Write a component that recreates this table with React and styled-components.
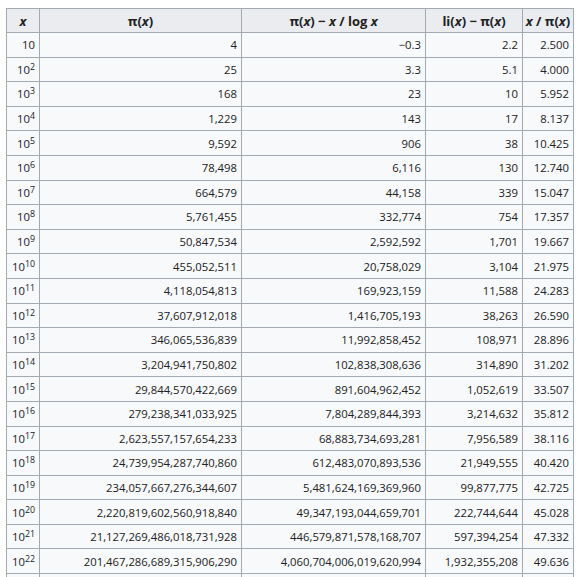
import React from 'react'
import styled, { createGlobalStyle } from 'styled-components'

const GlobalStyle = createGlobalStyle`
  html, body {
    margin: 0;
    padding: 0;
    background: #ffffff;
  }
`;

const Page = styled.div`
  padding: 8px 0 0 6px;
  font-family: 'Open Sans', 'Noto Sans', sans-serif;
  color: #202122;
`;

const Table = styled.table`
  border-collapse: collapse;
  background: #f8f9fa;
  border: 1px solid #a2a9b1;
  font-size: 11.3px;
  table-layout: fixed;
  width: 567px;
`;

const Col = styled.col`
  width: ${props => props.$w}px;
`;

const HeadRow = styled.tr`
  height: 24px;
`;

const HeadCell = styled.th`
  background: #eaecf0;
  border: 1px solid #a2a9b1;
  padding: 0 2px;
  font-size: 13px;
  font-weight: 700;
  text-align: center;
  white-space: nowrap;
  overflow: hidden;

  i {
    font-style: italic;
  }
`;

const Row = styled.tr`
  height: 24.6px;
`;

const Cell = styled.td`
  border: 1px solid #a2a9b1;
  padding: 0 4px;
  text-align: right;
  white-space: nowrap;
  overflow: hidden;
`;

const Sup = styled.sup`
  font-size: 0.78em;
  line-height: 0;
  vertical-align: 0.45em;
`;

const rows = [
  [1, '4', '\u22120.3', '2.2', '2.500'],
  [2, '25', '3.3', '5.1', '4.000'],
  [3, '168', '23', '10', '5.952'],
  [4, '1,229', '143', '17', '8.137'],
  [5, '9,592', '906', '38', '10.425'],
  [6, '78,498', '6,116', '130', '12.740'],
  [7, '664,579', '44,158', '339', '15.047'],
  [8, '5,761,455', '332,774', '754', '17.357'],
  [9, '50,847,534', '2,592,592', '1,701', '19.667'],
  [10, '455,052,511', '20,758,029', '3,104', '21.975'],
  [11, '4,118,054,813', '169,923,159', '11,588', '24.283'],
  [12, '37,607,912,018', '1,416,705,193', '38,263', '26.590'],
  [13, '346,065,536,839', '11,992,858,452', '108,971', '28.896'],
  [14, '3,204,941,750,802', '102,838,308,636', '314,890', '31.202'],
  [15, '29,844,570,422,669', '891,604,962,452', '1,052,619', '33.507'],
  [16, '279,238,341,033,925', '7,804,289,844,393', '3,214,632', '35.812'],
  [17, '2,623,557,157,654,233', '68,883,734,693,281', '7,956,589', '38.116'],
  [18, '24,739,954,287,740,860', '612,483,070,893,536', '21,949,555', '40.420'],
  [19, '234,057,667,276,344,607', '5,481,624,169,369,960', '99,877,775', '42.725'],
  [20, '2,220,819,602,560,918,840', '49,347,193,044,659,701', '222,744,644', '45.028'],
  [21, '21,127,269,486,018,731,928', '446,579,871,578,168,707', '597,394,254', '47.332'],
  [22, '201,467,286,689,315,906,290', '4,060,704,006,019,620,994', '1,932,355,208', '49.636'],
];

const App = () => {
  return (
    <Page>
      <GlobalStyle />
      <Table>
        <colgroup>
          <Col $w={33} />
          <Col $w={202} />
          <Col $w={184} />
          <Col $w={97} />
          <Col $w={51} />
        </colgroup>
        <thead>
          <HeadRow>
            <HeadCell><i>x</i></HeadCell>
            <HeadCell>π(<i>x</i>)</HeadCell>
            <HeadCell>π(<i>x</i>) − <i>x</i> / log <i>x</i></HeadCell>
            <HeadCell>li(<i>x</i>) − π(<i>x</i>)</HeadCell>
            <HeadCell><i>x</i> / π(<i>x</i>)</HeadCell>
          </HeadRow>
        </thead>
        <tbody>
          {rows.map(([exp, pi, diff, li, ratio]) => (
            <Row key={exp}>
              <Cell>10{exp > 1 && <Sup>{exp}</Sup>}</Cell>
              <Cell>{pi}</Cell>
              <Cell>{diff}</Cell>
              <Cell>{li}</Cell>
              <Cell>{ratio}</Cell>
            </Row>
          ))}
          {/* next row continues below the visible area */}
          <Row>
            <Cell />
            <Cell />
            <Cell />
            <Cell />
            <Cell />
          </Row>
        </tbody>
      </Table>
    </Page>
  )
}

export default App
